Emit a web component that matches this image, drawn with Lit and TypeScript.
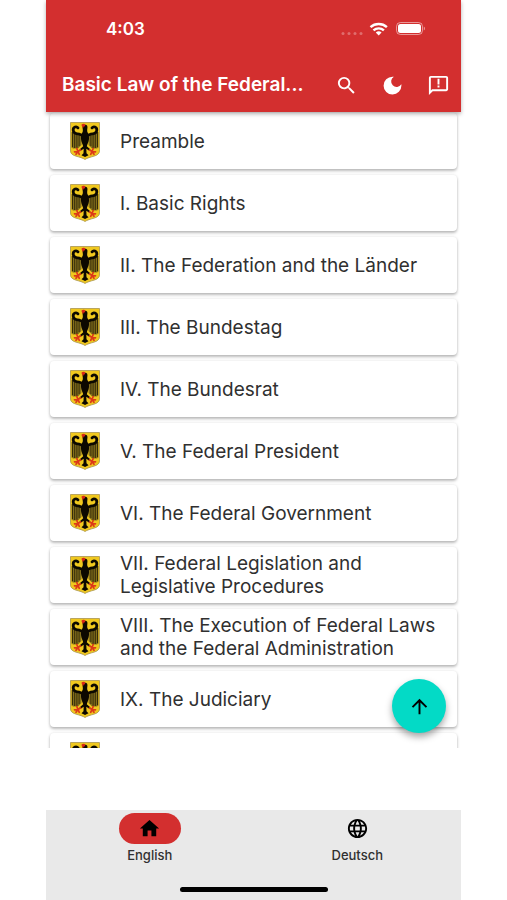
import { LitElement, html, css, svg } from "lit";
import { customElement, state } from "lit/decorators.js";

const chapters = [
  "Preamble",
  "I. Basic Rights",
  "II. The Federation and the Länder",
  "III. The Bundestag",
  "IV. The Bundesrat",
  "V. The Federal President",
  "VI. The Federal Government",
  "VII. Federal Legislation and Legislative Procedures",
  "VIII. The Execution of Federal Laws and the Federal Administration",
  "IX. The Judiciary",
  "X. Finance",
];

const icons = {
  search: svg`<path d="M15.5 14h-.79l-.28-.27A6.47 6.47 0 0 0 16 9.5 6.5 6.5 0 1 0 9.5 16c1.61 0 3.09-.59 4.23-1.57l.27.28v.79l5 4.99L20.49 19l-4.99-5zm-6 0C7.01 14 5 11.99 5 9.5S7.01 5 9.5 5 14 7.01 14 9.5 11.99 14 9.5 14z"/>`,
  moon: svg`<path d="M12 2.800A9.300 9.300 0 1 0 21.300 12c0-.5 0-.8-.1-1.300A5.700 5.700 0 1 1 13.400 2.900 9 9 0 0 0 12 2.800z"/>`,
  feedback: svg`<path d="M20 2H4c-1.1 0-1.99.9-1.99 2L2 22l4-4h14c1.1 0 2-.9 2-2V4c0-1.1-.9-2-2-2zm0 14H5.17l-.59.59-.58.58V4h16v12zm-9-4h2v2h-2zm0-7h2v6h-2z"/>`,
  up: svg`<path d="M4 12l1.41 1.41L11 7.83V20h2V7.83l5.58 5.59L20 12l-8-8-8 8z"/>`,
  home: svg`<path d="M10 20v-6h4v6h5v-8h3L12 3 2 12h3v8z"/>`,
  globe: svg`<path d="M11.99 2C6.47 2 2 6.48 2 12s4.47 10 9.99 10C17.52 22 22 17.52 22 12S17.52 2 11.99 2zm6.93 6h-2.95a15.65 15.65 0 0 0-1.38-3.56A8.03 8.03 0 0 1 18.92 8zM12 4.04c.83 1.2 1.48 2.53 1.91 3.96h-3.82c.43-1.43 1.08-2.76 1.91-3.96zM4.26 14C4.1 13.36 4 12.69 4 12s.1-1.36.26-2h3.38c-.08.66-.14 1.32-.14 2s.06 1.34.14 2H4.26zm.82 2h2.95c.32 1.25.78 2.45 1.38 3.56A7.987 7.987 0 0 1 5.08 16zm2.95-8H5.08a7.987 7.987 0 0 1 4.33-3.56A15.65 15.65 0 0 0 8.03 8zM12 19.96c-.83-1.2-1.48-2.53-1.91-3.96h3.82c-.43 1.43-1.08 2.76-1.91 3.96zM14.34 14H9.66c-.09-.66-.16-1.32-.16-2s.07-1.35.16-2h4.68c.09.65.16 1.32.16 2s-.07 1.34-.16 2zm.25 5.56c.6-1.11 1.06-2.31 1.38-3.56h2.95a8.03 8.03 0 0 1-4.33 3.56zM16.36 14c.08-.66.14-1.32.14-2s-.06-1.34-.14-2h3.38c.16.64.26 1.31.26 2s-.1 1.36-.26 2h-3.38z"/>`,
};

const icon = (name: keyof typeof icons) =>
  html`<svg class="icon" viewBox="0 0 24 24" aria-hidden="true">${icons[name]}</svg>`;

@customElement("eagle-shield")
export class EagleShield extends LitElement {
  static styles = css`
    :host { display: block; }
    svg { display: block; width: 30px; height: 38px; }
  `;

  render() {
    return html`<svg viewBox="0 0 30 38" aria-hidden="true">
      <path d="M.5.5h29v28.500c0 2.500-2 4-5 5-4 1.200-7.500 2-9.500 3.500-2-1.500-5.500-2.300-9.500-3.500-3-1-5-2.500-5-5z" fill="#f0c81e" stroke="#a99550" stroke-width=".8"/>
      <path d="M1.500 10l10 3.500V23L8 26.500H3l-1.500-1zM28.500 10l-10 3.500V23l3.500 3.500h5l1.500-1z" fill="#84701c"/>
      <g fill="none" stroke="#2a2208" stroke-width=".9">
        <path d="M2.500 10v15M4.700 11v15M6.900 11v15M9.100 12v12M20.900 12v12M23.100 11v15M25.300 11v15M27.500 10v15"/>
      </g>
      <g fill="none" stroke="#0c0900" stroke-width="2.800" stroke-linecap="round" stroke-linejoin="round">
        <path d="M8 5.800C6.500 4 3.200 4.800 3.200 8c0 3 3.300 4 6.300 4.200L14 14"/>
        <path d="M22 5.800c1.500-1.800 4.800-1 4.800 2.200 0 3-3.300 4-6.300 4.200L16 14"/>
      </g>
      <path d="M12.500 4.500c0-2 4-2.700 4.800-.5.500 2-.5 3.300 0 5.800 1 2 2 4 1.700 7.200-.3 3.500-1.700 5-2.200 7.200l3.700 3.300-1.200 1.200-3-2 .2 4.500 2 2L15 35l-3.500-1.800 2-2 .2-4.500-3 2-1.200-1.200 3.700-3.300c-.5-2.200-1.900-3.700-2.200-7.200-.3-3.200.7-5.200 1.700-7.200.5-2-.2-3.300-.2-5.300z" fill="#0c0900"/>
      <path d="M11.400 2.800c1.200-1.300 3.400-1.300 3.800.1.200 1-.8 1.700-1.500 1.600l-.7 1.800-.9-1.800z" fill="#d92718"/>
      <g fill="none" stroke="#dc3a18" stroke-width="1.700" stroke-linecap="round">
        <path d="M10.500 28L8 29.500M8 29.500l-3.500.3M8 29.500l-2 2.800M8 29.500l1.300 2.800M8 29.500L6.800 26.500"/>
        <path d="M19.500 28l2.500 1.500M22 29.500l3.500.3M22 29.500l2 2.800M22 29.500l-1.300 2.800M22 29.500l1.200-3"/>
      </g>
    </svg>`;
  }
}

@customElement("app-root")
export class AppRoot extends LitElement {
  @state() private language = "English";

  static styles = css`
    :host {
      display: block;
      background: #fff;
      color: #303030;
      font-family: Inter, "Liberation Sans", sans-serif;
    }
    * { box-sizing: border-box; }
    button {
      border: 0;
      padding: 0;
      background: none;
      color: inherit;
      font: inherit;
      cursor: pointer;
    }
    .icon { display: block; width: 23px; height: 23px; fill: currentColor; }
    .page {
      height: 100vh;
      padding: 0 46px;
      display: flex;
      flex-direction: column;
    }
    .header {
      position: relative;
      z-index: 1;
      background: #d32f2f;
      color: #fff;
      box-shadow: 0 2px 4px rgba(0, 0, 0, 0.3);
    }
    .status {
      display: flex;
      align-items: center;
      height: 58px;
      padding: 0 36px 0 60px;
    }
    .time { flex: 1; font-size: 17px; font-weight: 600; }
    .signals { display: block; width: 84px; height: 16px; }
    .toolbar { display: flex; align-items: center; height: 54px; padding-left: 16px; }
    .title {
      flex: 1;
      min-width: 0;
      margin: 0;
      font-size: 19px;
      line-height: 24px;
      font-weight: 600;
      white-space: nowrap;
    }
    .tool { display: grid; place-items: center; width: 46px; height: 46px; }
    .content { position: relative; flex: 1; min-height: 0; display: flex; }
    .list {
      flex: 1;
      margin: 0;
      padding: 1px 4px;
      display: flex;
      flex-direction: column;
      gap: 6px;
      list-style: none;
      overflow: hidden;
    }
    .card {
      flex: none;
      display: flex;
      align-items: center;
      gap: 20px;
      width: 100%;
      min-height: 56px;
      padding: 0 16px 0 20px;
      border-radius: 4px;
      background: #fff;
      box-shadow: 0 2px 3px rgba(0, 0, 0, 0.25), 0 0 3px rgba(0, 0, 0, 0.1);
      font-size: 19px;
      line-height: 23px;
      text-align: left;
    }
    .fab {
      position: absolute;
      right: 15px;
      bottom: 15px;
      display: grid;
      place-items: center;
      width: 54px;
      height: 54px;
      border-radius: 50%;
      background: #03dac6;
      color: #000;
      box-shadow: 0 4px 7px rgba(0, 0, 0, 0.35);
    }
    .nav {
      margin-top: 62px;
      background: #e9e9e9;
      display: flex;
      flex-direction: column;
      align-items: center;
      height: 90px;
    }
    .tabs { display: flex; width: 100%; flex: 1; }
    .tab {
      flex: 1;
      display: flex;
      flex-direction: column;
      align-items: center;
      gap: 3px;
      padding-top: 3px;
      font-size: 13px;
      line-height: 16px;
      font-weight: 500;
    }
    .pill {
      display: grid;
      place-items: center;
      width: 62px;
      height: 31px;
      border-radius: 16px;
      color: #000;
    }
    .selected { background: #d32f2f; }
    .indicator {
      width: 148px;
      height: 5px;
      margin-bottom: 8px;
      border-radius: 3px;
      background: #000;
    }
  `;

  private tab(label: string, name: keyof typeof icons) {
    const on = this.language === label;
    return html`<button class="tab" aria-pressed=${on} @click=${() => (this.language = label)}>
      <span class="pill ${on ? "selected" : ""}">${icon(name)}</span>
      <span>${label}</span>
    </button>`;
  }

  private toTop() {
    this.renderRoot.querySelector(".list")?.scrollTo({ top: 0, behavior: "smooth" });
  }

  render() {
    return html`<div class="page">
      <header class="header">
        <div class="status">
          <span class="time">4:03</span>
          <svg class="signals" viewBox="0 0 84 16" aria-hidden="true">
            <g fill="#fff" fill-opacity=".3">
              <circle cx="2" cy="12.500" r="1.500"/><circle cx="8" cy="12.500" r="1.500"/>
              <circle cx="14" cy="12.500" r="1.500"/><circle cx="20" cy="12.500" r="1.500"/>
            </g>
            <g fill="none" stroke="#fff" stroke-width="2.400">
              <path d="M29.500 6.200a12.200 12.200 0 0 1 16.400 0"/>
              <path d="M32.500 9.400a7.600 7.600 0 0 1 10.400 0"/>
            </g>
            <path d="M37.700 14.500l-2.900-3a4.300 4.300 0 0 1 5.800 0z" fill="#fff"/>
            <rect x="55.500" y="1.500" width="26" height="12" rx="4" fill="none" stroke="#fff" stroke-opacity=".5"/>
            <rect x="57" y="3" width="23" height="9" rx="2.500" fill="#fff"/>
            <path d="M82.800 5.500v4q1.200-.5 1.200-2t-1.200-2z" fill="#fff" fill-opacity=".5"/>
          </svg>
        </div>
        <div class="toolbar">
          <h1 class="title">Basic Law of the Federal...</h1>
          <button class="tool" aria-label="Search">${icon("search")}</button>
          <button class="tool" aria-label="Dark mode">${icon("moon")}</button>
          <button class="tool" aria-label="Feedback">${icon("feedback")}</button>
        </div>
      </header>
      <main class="content">
        <ul class="list">
          ${chapters.map(
            (c) => html`<li><button class="card"><eagle-shield></eagle-shield><span>${c}</span></button></li>`
          )}
        </ul>
        <button class="fab" aria-label="Back to top" @click=${this.toTop}>${icon("up")}</button>
      </main>
      <nav class="nav" aria-label="Language">
        <div class="tabs">${this.tab("English", "home")}${this.tab("Deutsch", "globe")}</div>
        <div class="indicator"></div>
      </nav>
    </div>`;
  }
}
